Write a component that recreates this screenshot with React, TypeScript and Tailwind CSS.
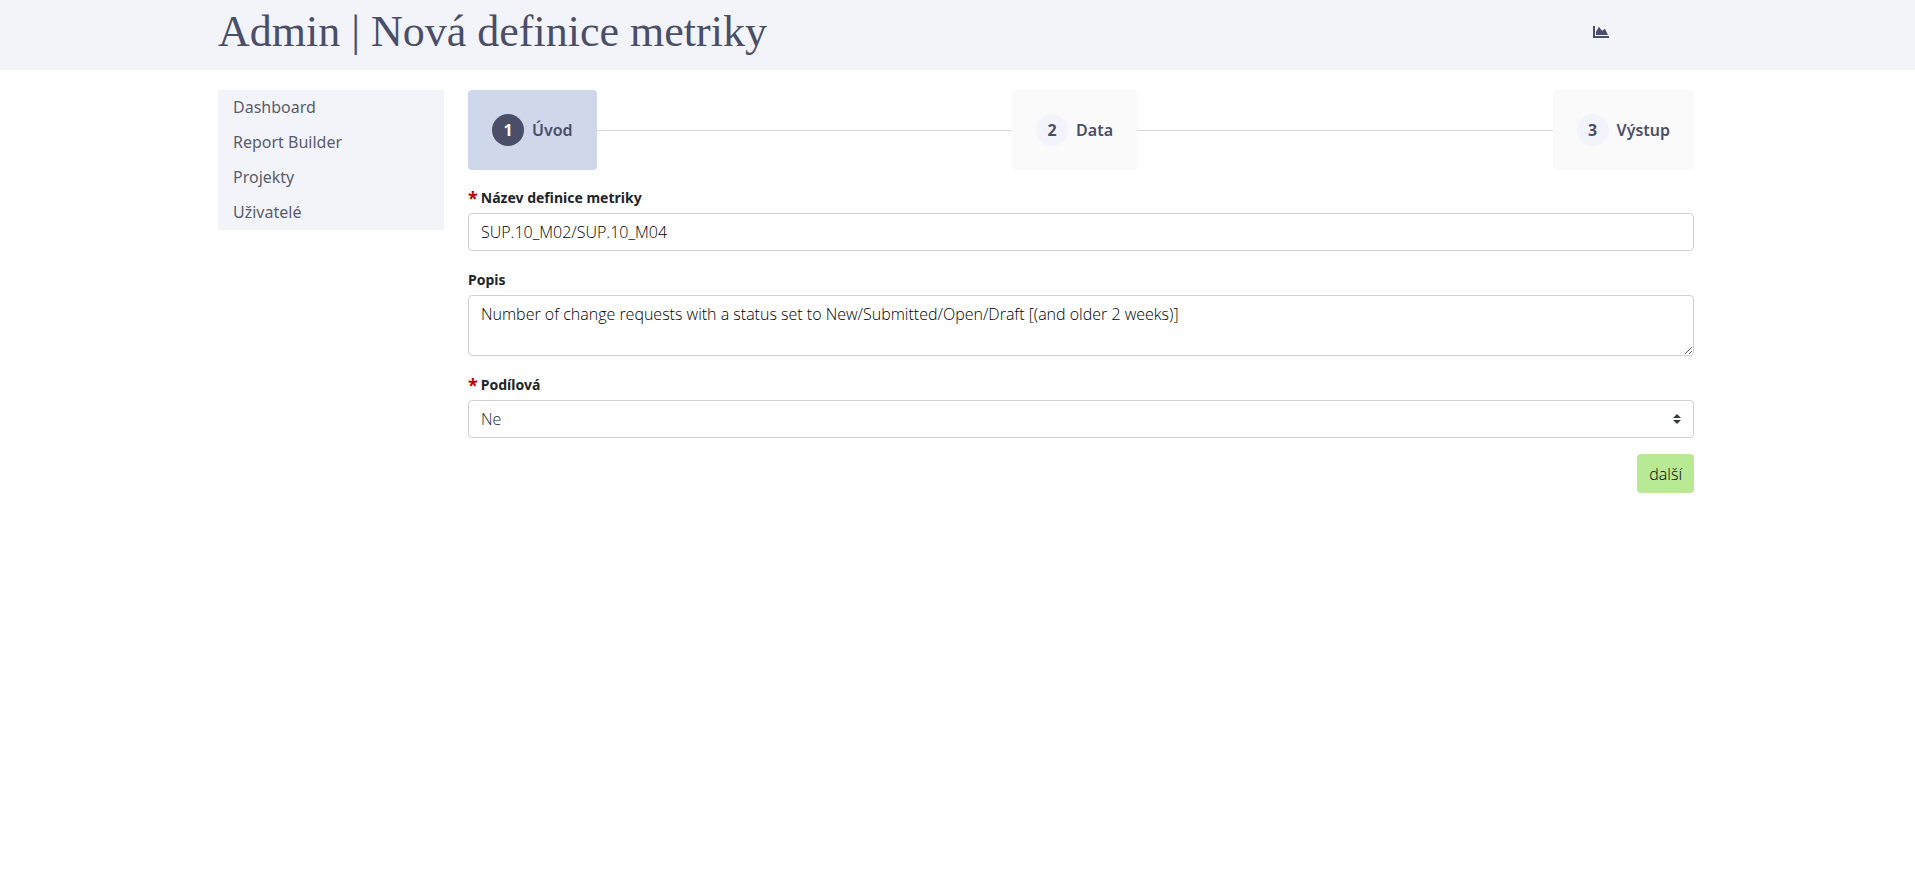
import { FaChartArea } from "react-icons/fa";
import type { ReactNode } from "react";

const navItems = ["Dashboard", "Report Builder", "Projekty", "Uživatelé"];
const steps = ["Úvod", "Data", "Výstup"];

const control =
  "block w-full rounded border border-[#ced0d4] bg-white px-3 font-['Open_Sans',sans-serif] text-base font-light";

function Label({ htmlFor, required, children }: { htmlFor: string; required?: boolean; children: ReactNode }) {
  return (
    <label htmlFor={htmlFor} className="flex h-7 items-center pb-0.5 text-sm font-bold">
      {required && <span className="mr-[3px] text-lg leading-5 text-[#c00000]">*</span>}
      {children}
    </label>
  );
}

function Stepper() {
  return (
    <ol className="flex items-center">
      {steps.map((name, i) => (
        <li key={name} className={i > 0 ? "flex grow items-center" : "flex items-center"}>
          {i > 0 && <span className="h-px grow bg-[#d8d8dc]" />}
          <button
            type="button"
            className={
              i === 0
                ? "flex h-20 items-center gap-2 rounded bg-[#cfd8ea] px-6 font-semibold text-[#4a4e69]"
                : "flex h-20 items-center gap-2 rounded bg-[#fafafa] px-6 font-semibold text-[#4a4e69]"
            }
          >
            <span
              className={
                i === 0
                  ? "flex size-8 items-center justify-center rounded-full bg-[#4a4e69] font-bold text-white"
                  : "flex size-8 items-center justify-center rounded-full bg-[#f3f4fb] font-bold"
              }
            >
              {i + 1}
            </span>
            {name}
          </button>
        </li>
      ))}
    </ol>
  );
}

export default function App() {
  return (
    <div className="font-['Noto_Sans',sans-serif] text-base text-[#212529]">
      <header className="bg-[#f3f4fa] pr-[3px] text-[#4a4e69]">
        <div className="mx-auto flex h-[70px] max-w-[1476px] items-center justify-between">
          <h1 className="pb-1.5 font-['Liberation_Serif',serif] text-[44px] leading-none">
            Admin | Nová definice metriky
          </h1>
          <a href="#reporty" aria-label="Reporty" className="mr-[85px] pb-1.5">
            <FaChartArea size={16} />
          </a>
        </div>
      </header>

      <div className="pt-5 pr-[3px]">
        <div className="mx-auto flex max-w-[1476px] items-start gap-6">
          <nav className="w-[226px] shrink-0 bg-[#f3f4fa]">
            {navItems.map((item) => (
              <a key={item} href="#menu" className="block px-[15px] leading-[35px] text-[#5a5c6c]">
                {item}
              </a>
            ))}
          </nav>

          <main className="min-w-0 grow">
            <Stepper />
            <form className="mt-[15px] flex flex-col gap-4">
              <div>
                <Label htmlFor="name" required>
                  Název definice metriky
                </Label>
                <input
                  id="name"
                  type="text"
                  defaultValue="SUP.10_M02/SUP.10_M04"
                  className={`${control} h-[38px] text-black`}
                />
              </div>
              <div>
                <Label htmlFor="description">Popis</Label>
                <textarea
                  id="description"
                  rows={2}
                  defaultValue="Number of change requests with a status set to New/Submitted/Open/Draft [(and older 2 weeks)]"
                  className={`${control} h-[61px] py-[6px] text-black`}
                />
              </div>
              <div>
                <Label htmlFor="share" required>
                  Podílová
                </Label>
                <div className="relative">
                  <select id="share" defaultValue="Ne" className={`${control} h-[38px] appearance-none text-[#212529]`}>
                    <option>Ne</option>
                    <option>Ano</option>
                  </select>
                  <svg
                    viewBox="0 0 8 10"
                    className="pointer-events-none absolute top-[14px] right-[13px] h-[10px] w-2"
                    fill="#343a40"
                    aria-hidden="true"
                  >
                    <path d="M4 0 0 4h8zM0 6l4 4 4-4z" />
                  </svg>
                </div>
              </div>
              <button
                type="submit"
                className="h-[39px] self-end rounded bg-[#b8e994] px-3 font-['Open_Sans',sans-serif] font-light text-black"
              >
                další
              </button>
            </form>
          </main>
        </div>
      </div>
    </div>
  );
}
